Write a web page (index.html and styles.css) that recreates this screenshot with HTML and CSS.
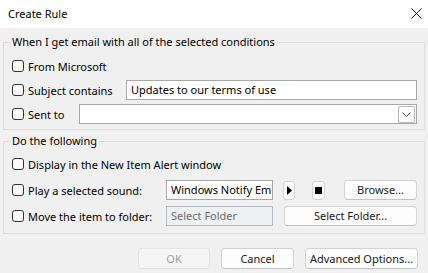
FILE: index.html
```html
<!DOCTYPE html>
<html>
<head>
    <title>Create Rule</title>
    <link rel="stylesheet" href="styles.css">
</head>
<body>
    <div class="titlebar">
        <span class="title">Create Rule</span>
        <svg class="close" width="11" height="11" viewBox="0 0 11 11">
            <path d="M0.5 0.5 L10.5 10.5 M10.5 0.5 L0.5 10.5" stroke="#1a1a1a" stroke-width="1" fill="none"/>
        </svg>
    </div>

    <div class="dialog">
        <fieldset class="group">
            <legend>When I get email with all of the selected conditions</legend>
            <div class="row">
                <label class="check"><span class="box"></span>From Microsoft</label>
            </div>
            <div class="row">
                <label class="check subject-label"><span class="box"></span>Subject contains</label>
                <div class="textbox grow">Updates to our terms of use</div>
            </div>
            <div class="row">
                <label class="check sent-label"><span class="box"></span>Sent to</label>
                <div class="textbox grow combo">
                    <span class="drop">
                        <svg width="9" height="5" viewBox="0 0 9 5">
                            <path d="M0.5 0.5 L4.5 4.5 L8.5 0.5" stroke="#555" stroke-width="1" fill="none"/>
                        </svg>
                    </span>
                </div>
            </div>
        </fieldset>

        <fieldset class="group group-actions">
            <legend>Do the following</legend>
            <div class="row tall">
                <label class="check"><span class="box"></span>Display in the New Item Alert window</label>
            </div>
            <div class="row tall">
                <label class="check action-label"><span class="box"></span>Play a selected sound:</label>
                <div class="textbox short">Windows Notify Em</div>
                <button class="mini play-btn">
                    <svg width="5" height="9" viewBox="0 0 5 9"><path d="M0 0 L5 4.5 L0 9 Z" fill="#000"/></svg>
                </button>
                <button class="mini stop-btn">
                    <svg width="7" height="7" viewBox="0 0 7 7"><rect width="7" height="7" fill="#000"/></svg>
                </button>
                <button class="btn browse-btn">Browse...</button>
            </div>
            <div class="row tall">
                <label class="check action-label"><span class="box"></span>Move the item to folder:</label>
                <div class="textbox short disabled">Select Folder</div>
                <button class="btn folder-btn">Select Folder...</button>
            </div>
        </fieldset>

        <div class="footer">
            <button class="btn ok-btn" disabled>OK</button>
            <button class="btn cancel-btn">Cancel</button>
            <button class="btn advanced-btn">Advanced Options...</button>
        </div>
    </div>
</body>
</html>
```

FILE: styles.css
```css
* {
    margin: 0;
    padding: 0;
    box-sizing: border-box;
}

body {
    font-family: "Noto Sans", Arial, sans-serif;
    font-size: 11px;
    color: #000;
    background-color: #f0f0f0;
    width: 428px;
    height: 273px;
    overflow: hidden;
}

.titlebar {
    height: 28px;
    background-color: #fff;
    display: flex;
    align-items: center;
    justify-content: space-between;
    padding: 0 6px 2px 8px;
}

.title {
    font-size: 11px;
    color: #000;
}

.dialog {
    padding: 6px 3px 0 3px;
}

/* Group boxes */
.group {
    border: 1px solid #dcdcdc;
    padding: 4px 7px 3px 8px;
}

.group legend {
    line-height: 16px;
    padding: 0 2px 0 1px;
    margin-left: -1px;
}

.group-actions {
    margin-top: 3px;
    padding-top: 2px;
    padding-bottom: 4px;
}

.row {
    display: flex;
    align-items: center;
    height: 24px;
}

.row.tall {
    height: 26px;
}

/* Checkbox + caption */
.check {
    display: flex;
    align-items: center;
    gap: 4px;
    white-space: nowrap;
}

.box {
    width: 12px;
    height: 12px;
    border: 1px solid #333;
    border-radius: 3px;
    background-color: #fff;
    flex-shrink: 0;
}

.subject-label {
    width: 114px;
}

.sent-label {
    width: 67px;
}

.action-label {
    width: 154px;
}

/* Text boxes */
.textbox {
    height: 20px;
    border: 1px solid #a8a8a8;
    background-color: #fff;
    padding: 0 4px;
    line-height: 18px;
    white-space: nowrap;
    overflow: hidden;
}

.grow {
    flex: 1;
}

.combo {
    display: flex;
    justify-content: flex-end;
    align-items: center;
    padding-right: 1px;
}

.drop {
    width: 17px;
    height: 17px;
    border: 1px solid #b8b8b8;
    border-radius: 2px;
    display: flex;
    align-items: center;
    justify-content: center;
}

.short {
    width: 107px;
}

.disabled {
    background-color: #eef1f4;
    border-color: #b3bac1;
    color: #6d6d6d;
}

/* Buttons */
button {
    font-family: inherit;
    font-size: 11px;
    white-space: nowrap;
}

.btn {
    height: 20px;
    background-color: #fdfdfd;
    color: #1a1a1a;
    border: 1px solid #d3d3d3;
    border-bottom-color: #c2c2c2;
    border-radius: 4px;
    line-height: 18px;
}

.btn:disabled {
    background-color: #f5f5f5;
    color: #a0a0a0;
    border-color: #e2e2e2;
}

.mini {
    width: 12px;
    height: 19px;
    background-color: #fdfdfd;
    border: 1px solid #d3d3d3;
    border-radius: 3px;
    display: flex;
    align-items: center;
    justify-content: center;
}

.play-btn {
    margin-left: 10px;
}

.stop-btn {
    margin-left: 17px;
    width: 13px;
}

.browse-btn {
    width: 73px;
    margin-left: auto;
}

.folder-btn {
    width: 133px;
    margin-left: auto;
}

.footer {
    display: flex;
    justify-content: flex-end;
    gap: 11px;
    margin-top: 14px;
    padding-right: 7px;
}

.ok-btn {
    width: 72px;
    height: 21px;
}

.cancel-btn {
    width: 73px;
    height: 21px;
}

.advanced-btn {
    width: 113px;
    height: 21px;
}
```
